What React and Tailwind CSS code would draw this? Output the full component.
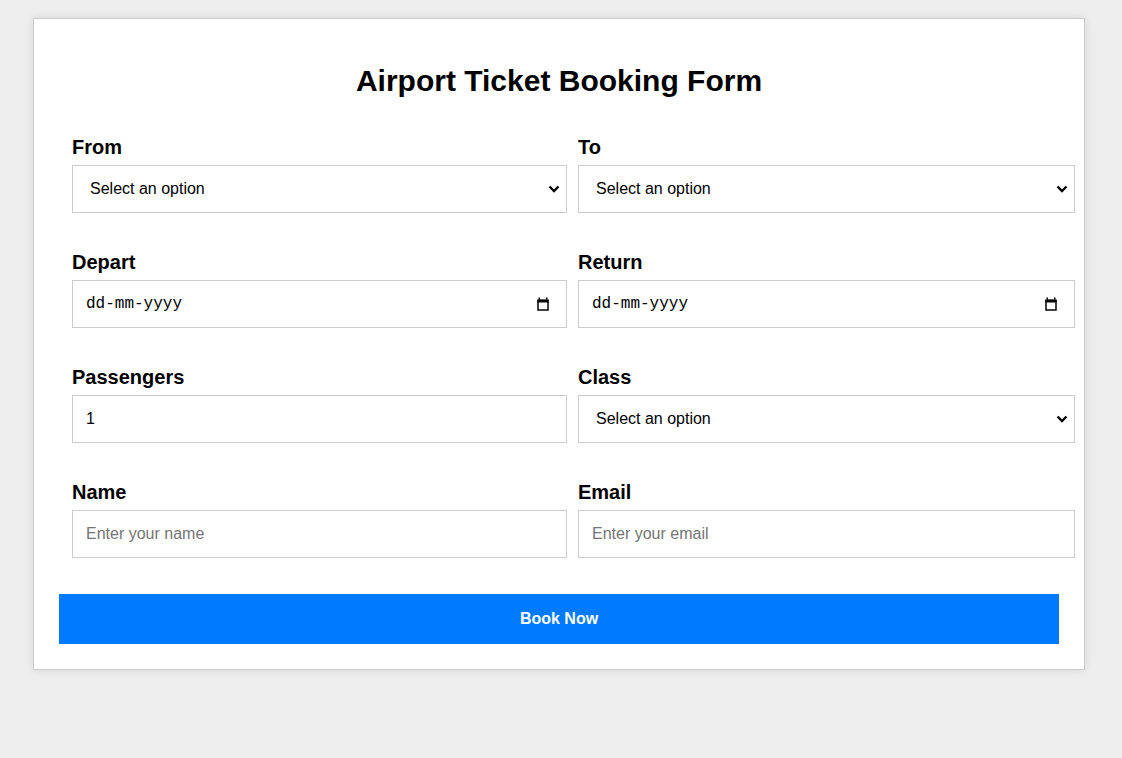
import React from 'react';

const inputCls =
  'block w-full h-[48px] border border-[#cccccc] bg-white px-[13px] text-[16px] text-black outline-none placeholder:text-[#757575]';

function Field({ label, children }) {
  return (
    <div className="flex flex-col">
      <label className="text-[20px] leading-[23px] font-bold text-black mb-[6px]">{label}</label>
      {children}
    </div>
  );
}

function Select() {
  return (
    <div className="relative">
      <select className={`${inputCls} appearance-none pl-[17px] pr-[28px]`} defaultValue="">
        <option value="">Select an option</option>
      </select>
      <svg
        className="absolute right-[7px] top-1/2 -translate-y-1/2 pointer-events-none"
        width="12"
        height="8"
        viewBox="0 0 12 8"
      >
        <path d="M1.5 1.5 L6 6 L10.5 1.5" fill="none" stroke="#000" strokeWidth="2.4" />
      </svg>
    </div>
  );
}

function DateInput() {
  return (
    <div className="relative">
      <input
        type="text"
        placeholder="dd-mm-yyyy"
        className={`${inputCls} font-mono pr-[40px] placeholder:text-black`}
      />
      <svg
        className="absolute right-[18px] top-1/2 -translate-y-1/2 pointer-events-none"
        width="12"
        height="14"
        viewBox="0 0 12 14"
      >
        <rect x="1" y="3.5" width="10" height="9.5" fill="none" stroke="#000" strokeWidth="1.5" />
        <rect x="0.5" y="2.5" width="11" height="3" fill="#000" />
        <rect x="1.5" y="0.5" width="1.5" height="2" fill="#000" />
        <rect x="9" y="0.5" width="1.5" height="2" fill="#000" />
      </svg>
    </div>
  );
}

export default function App() {
  return (
    <div className="min-h-screen bg-[#eeeeee] pt-[18px] pl-[33px]" style={{ fontFamily: '"Liberation Sans", Arial, sans-serif' }}>
      <div className="w-[1052px] bg-white border border-[#cccccc] shadow-[0_0_10px_rgba(0,0,0,0.1)] p-[25px]">
        <h1 className="mt-[20px] text-center text-[30px] leading-[34px] font-bold text-black">
          Airport Ticket Booking Form
        </h1>

        <form className="mt-[38px]">
          <div className="pl-[13px] grid grid-cols-[495px_497px] gap-x-[11px] gap-y-[38px]">
            <Field label="From">
              <Select />
            </Field>
            <Field label="To">
              <Select />
            </Field>
            <Field label="Depart">
              <DateInput />
            </Field>
            <Field label="Return">
              <DateInput />
            </Field>
            <Field label="Passengers">
              <input type="number" defaultValue="1" className={inputCls} />
            </Field>
            <Field label="Class">
              <Select />
            </Field>
            <Field label="Name">
              <input type="text" placeholder="Enter your name" className={inputCls} />
            </Field>
            <Field label="Email">
              <input type="email" placeholder="Enter your email" className={inputCls} />
            </Field>
          </div>

          <button
            type="button"
            className="mt-[36px] block w-[1000px] h-[50px] bg-[#007bff] text-white text-[16px] font-bold"
          >
            Book Now
          </button>
        </form>
      </div>
    </div>
  );
}
